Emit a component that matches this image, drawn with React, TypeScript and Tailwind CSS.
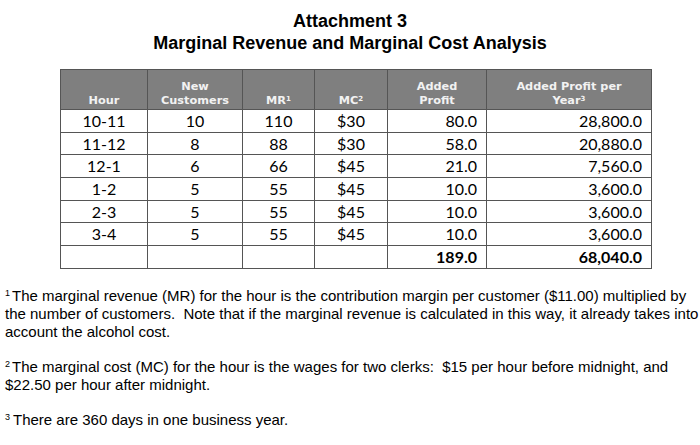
const rows = [
  ['10-11', '10', '110', '$30', '80.0', '28,800.0'],
  ['11-12', '8', '88', '$30', '58.0', '20,880.0'],
  ['12-1', '6', '66', '$45', '21.0', '7,560.0'],
  ['1-2', '5', '55', '$45', '10.0', '3,600.0'],
  ['2-3', '5', '55', '$45', '10.0', '3,600.0'],
  ['3-4', '5', '55', '$45', '10.0', '3,600.0'],
];

const cell = 'border border-[#555] h-[22.7px] p-0 leading-none';
const head = 'border border-[#555] bg-[#7f7f7f] text-[#f2f2f2] font-bold align-bottom pb-[1px] leading-[14px] text-[11.3px]';

export default function App() {
  return (
    <div className="w-[700px] h-[445px] bg-white overflow-hidden text-black">
      <div className="pt-[10px] text-center font-bold text-[18px] leading-[22px] font-['Liberation_Sans',Arial,sans-serif]">
        <p>Attachment 3</p>
        <p>Marginal Revenue and Marginal Cost Analysis</p>
      </div>

      <table className="ml-[60px] mt-[15px] border-collapse table-fixed w-[591px] font-['Lato','Open_Sans',sans-serif] text-[16px]">
        <colgroup>
          <col className="w-[87px]" />
          <col className="w-[95px]" />
          <col className="w-[72px]" />
          <col className="w-[73px]" />
          <col className="w-[99px]" />
          <col className="w-[165px]" />
        </colgroup>
        <thead className="font-['DejaVu_Sans','Liberation_Sans',sans-serif]">
          <tr className="h-[40px]">
            <th className={head}>Hour</th>
            <th className={head}>New<br />Customers</th>
            <th className={head}>MR<sup className="text-[7px]">1</sup></th>
            <th className={head}>MC<sup className="text-[7px]">2</sup></th>
            <th className={head}>Added<br />Profit</th>
            <th className={head}>Added Profit per<br />Year<sup className="text-[7px]">3</sup></th>
          </tr>
        </thead>
        <tbody>
          {rows.map((r) => (
            <tr key={r[0]}>
              <td className={`${cell} text-center`}>{r[0]}</td>
              <td className={`${cell} text-center`}>{r[1]}</td>
              <td className={`${cell} text-center`}>{r[2]}</td>
              <td className={`${cell} text-center`}>{r[3]}</td>
              <td className={`${cell} text-right pr-[9px]`}>{r[4]}</td>
              <td className={`${cell} text-right pr-[9px]`}>{r[5]}</td>
            </tr>
          ))}
          <tr>
            <td className={cell}></td>
            <td className={cell}></td>
            <td className={cell}></td>
            <td className={cell}></td>
            <td className={`${cell} text-right pr-[9px] font-bold`}>189.0</td>
            <td className={`${cell} text-right pr-[9px] font-bold`}>68,040.0</td>
          </tr>
        </tbody>
      </table>

      {/* footnotes: line breaks follow the source document */}
      <div className="mt-[18px] pl-[5px] text-[15px] leading-[18px] whitespace-nowrap font-['Liberation_Sans',Arial,sans-serif]">
        <p>
          <sup className="text-[9px] mr-[2px]">1</sup>The marginal revenue (MR) for the hour is the contribution margin per customer ($11.00) multiplied by
          <br />
          the number of customers.&nbsp; Note that if the marginal revenue is calculated in this way, it already takes into
          <br />
          account the alcohol cost.
        </p>
        <p className="mt-[17px]">
          <sup className="text-[9px] mr-[2px]">2</sup>The marginal cost (MC) for the hour is the wages for two clerks:&nbsp; $15 per hour before midnight, and
          <br />
          $22.50 per hour after midnight.
        </p>
        <p className="mt-[17px]">
          <sup className="text-[9px] mr-[3px]">3</sup>There are 360 days in one business year.
        </p>
      </div>
    </div>
  );
}
